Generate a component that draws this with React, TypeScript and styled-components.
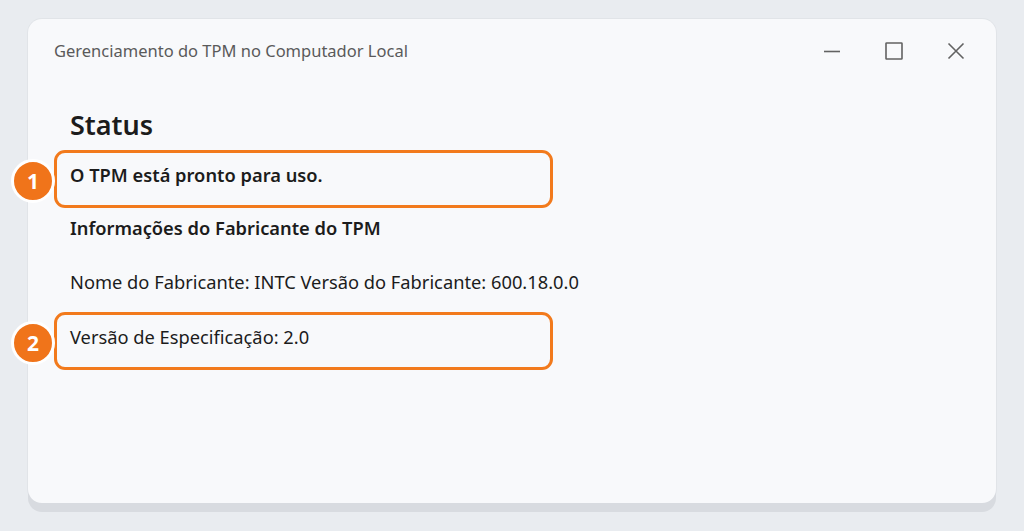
import React from "react";
import styled, { createGlobalStyle } from "styled-components";

const GlobalStyle = createGlobalStyle`
  html, body {
    margin: 0;
    padding: 0;
    background: #e9ecf0;
    font-family: "Noto Sans", "Open Sans", sans-serif;
  }
`;

const Page = styled.div`
  width: 1024px;
  height: 531px;
  padding: 19px 0 0 28px;
  box-sizing: border-box;
`;

const Window = styled.div`
  width: 968px;
  height: 484px;
  background: #f8f9fb;
  border-radius: 14px;
  box-shadow: 0 9px 0 #d8dbe0, 0 0 0 1px #e1e4e8;
  display: flex;
  flex-direction: column;
`;

const TitleBar = styled.div`
  height: 62px;
  display: flex;
  align-items: center;
  padding: 0 26px;
`;

const Title = styled.div`
  flex: 1;
  font-size: 16.5px;
  color: #5a5a5a;
  padding-top: 1px;
`;

const Controls = styled.div`
  display: flex;
  align-items: center;
  gap: 44px;
  margin-right: 5px;
  margin-top: 1px;
`;

const ControlIcon = styled.svg`
  width: 18px;
  height: 18px;
  display: block;
`;

const Content = styled.div`
  padding: 27px 42px 0;
  color: #1c1c1c;
`;

const Heading = styled.h1`
  margin: 0;
  font-size: 27px;
  line-height: 34px;
  font-weight: 600;
`;

const Highlight = styled.div<{ $top: number }>`
  position: relative;
  width: 499px;
  box-sizing: border-box;
  margin: ${(p) => p.$top}px 0 0 -16px;
  border: 3px solid #f27a1c;
  border-radius: 11px;
  padding: 9px 13px 17px;
`;

const Badge = styled.div`
  position: absolute;
  left: -46px;
  top: 6px;
  width: 38px;
  height: 38px;
  border-radius: 50%;
  background: #f0741a;
  border: 3px solid #ffffff;
  color: #fff;
  font-size: 21px;
  font-weight: 700;
  display: flex;
  align-items: center;
  justify-content: center;
  line-height: 1;
`;

const Line = styled.div<{ $bold?: boolean; $top?: number }>`
  font-size: 18.3px;
  line-height: 26px;
  font-weight: ${(p) => (p.$bold ? 600 : 400)};
  margin-top: ${(p) => p.$top ?? 0}px;
`;

export default function App() {
  return (
    <>
      <GlobalStyle />
      <Page>
        <Window>
          <TitleBar>
            <Title>Gerenciamento do TPM no Computador Local</Title>
            <Controls>
              <ControlIcon viewBox="0 0 18 18">
                <path d="M1 9.5h16" stroke="#626262" strokeWidth="1.6" />
              </ControlIcon>
              <ControlIcon viewBox="0 0 18 18">
                <rect x="1" y="1" width="16" height="16" rx="0.6" fill="none" stroke="#626262" strokeWidth="1.6" />
              </ControlIcon>
              <ControlIcon viewBox="0 0 18 18">
                <path d="M1.5 1.5l15 15M16.5 1.5l-15 15" stroke="#626262" strokeWidth="1.6" />
              </ControlIcon>
            </Controls>
          </TitleBar>
          <Content>
            <Heading>Status</Heading>
            <Highlight $top={8}>
              <Badge>1</Badge>
              <Line $bold>O TPM está pronto para uso.</Line>
            </Highlight>
            <Line $bold $top={7}>Informações do Fabricante do TPM</Line>
            <Line $top={28}>Nome do Fabricante: INTC Versão do Fabricante: 600.18.0.0</Line>
            <Highlight $top={17}>
              <Badge>2</Badge>
              <Line>Versão de Especificação: 2.0</Line>
            </Highlight>
          </Content>
        </Window>
      </Page>
    </>
  );
}
